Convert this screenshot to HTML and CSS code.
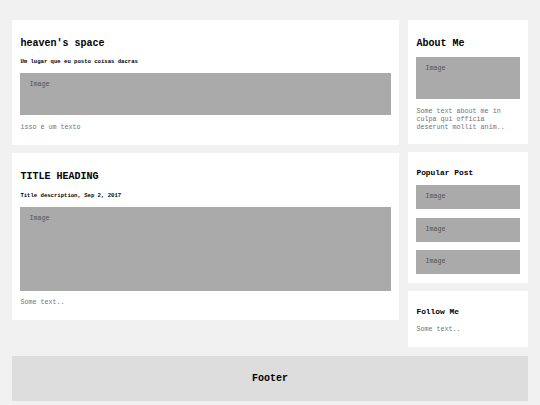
FILE: index.html
```html
<!DOCTYPE html>
<html lang="pt">
  <head>
    <meta charset="UTF-8" />
    <meta name="viewport" content="width=device-width, initial-scale=1.0" />
    <title>heaven's space</title>
    <link rel="stylesheet" href="styles.css">
  </head>
  <body>
    <div class="row">
      <div class="leftcolumn">
        <div class="card">
          <h2>heaven's space</h2>
          <h5>Um lugar que eu posto coisas dacras</h5>
          <div class="fakeimg short">Image</div>
          <p>isso é um texto</p>
        </div>
        <div class="card">
          <h2>TITLE HEADING</h2>
          <h5>Title description, Sep 2, 2017</h5>
          <div class="fakeimg tall">Image</div>
          <p>Some text..</p>
        </div>
      </div>

      <div class="rightcolumn">
        <div class="card">
          <h2>About Me</h2>
          <div class="fakeimg short">Image</div>
          <p>Some text about me in culpa qui officia deserunt mollit anim..</p>
        </div>
        <div class="card">
          <h3>Popular Post</h3>
          <div class="popular">
            <div class="fakeimg thumb">Image</div>
            <div class="fakeimg thumb">Image</div>
            <div class="fakeimg thumb">Image</div>
          </div>
        </div>
        <div class="card follow">
          <h3>Follow Me</h3>
          <p>Some text..</p>
        </div>
      </div>
    </div>

    <div class="footer">
      <h2>Footer</h2>
    </div>
  </body>
</html>
```

FILE: styles.css
```css
* {
  box-sizing: border-box;
}

body {
  margin: 0;
  padding: 11.5px 12px 12px;
  font-family: "Liberation Mono", "Courier New", monospace;
  background: #f1f1f1;
  color: #000;
}

.row {
  display: flex;
  align-items: flex-start;
}

.leftcolumn {
  width: 75%;
}

.rightcolumn {
  width: 25%;
  padding-left: 9px;
}

.card {
  background: white;
  padding: 8.4px;
  margin-top: 8.5px;
}

.rightcolumn .card + .card {
  margin-top: 7.8px;
}

h2 {
  font-size: 10px;
  line-height: 11.5px;
  margin: 9.3px 0 8.3px;
}

h3 {
  font-size: 7.9px;
  line-height: 9px;
  margin: 7.9px 0;
}

h5 {
  font-size: 5.6px;
  line-height: 6.6px;
  margin: 10.3px 0 7.3px;
}

p {
  font-size: 6.7px;
  line-height: 7.7px;
  margin: 8.7px 0 4.7px;
  color: #737373;
}

.follow p {
  margin-top: 10px;
  margin-bottom: 5.6px;
}

.fakeimg {
  background: #aaa;
  color: #555;
  font-size: 6.7px;
  line-height: 7.7px;
  padding: 8px 9px;
}

.fakeimg.short {
  height: 42px;
}

.fakeimg.tall {
  height: 84px;
}

.popular {
  display: flex;
  flex-direction: column;
  gap: 8.5px;
}

.fakeimg.thumb {
  height: 24px;
  display: flex;
  align-items: center;
  padding: 0 9px;
}

.footer {
  margin-top: 9px;
  padding: 8.4px;
  background: #ddd;
  text-align: center;
}

.footer h2 {
  margin: 8.3px 0;
}
```
